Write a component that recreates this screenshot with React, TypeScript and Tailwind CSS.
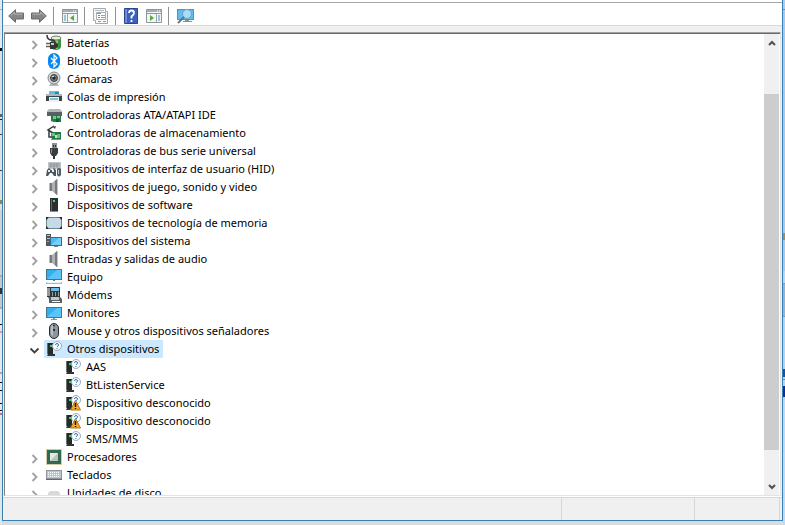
import type { ReactNode } from "react";
import clsx from "clsx";

type IconName =
  | "battery" | "bluetooth" | "camera" | "printer" | "ide" | "storage" | "usb" | "hid"
  | "speaker" | "software" | "memory" | "system" | "monitor" | "computer" | "modem"
  | "mouse" | "unknown" | "warning" | "cpu" | "keyboard" | "disk";

type Device = {
  label: string;
  icon: IconName;
  children?: Device[];
};

const devices: Device[] = [
  { label: "Baterías", icon: "battery" },
  { label: "Bluetooth", icon: "bluetooth" },
  { label: "Cámaras", icon: "camera" },
  { label: "Colas de impresión", icon: "printer" },
  { label: "Controladoras ATA/ATAPI IDE", icon: "ide" },
  { label: "Controladoras de almacenamiento", icon: "storage" },
  { label: "Controladoras de bus serie universal", icon: "usb" },
  { label: "Dispositivos de interfaz de usuario (HID)", icon: "hid" },
  { label: "Dispositivos de juego, sonido y video", icon: "speaker" },
  { label: "Dispositivos de software", icon: "software" },
  { label: "Dispositivos de tecnología de memoria", icon: "memory" },
  { label: "Dispositivos del sistema", icon: "system" },
  { label: "Entradas y salidas de audio", icon: "speaker" },
  { label: "Equipo", icon: "computer" },
  { label: "Módems", icon: "modem" },
  { label: "Monitores", icon: "monitor" },
  { label: "Mouse y otros dispositivos señaladores", icon: "mouse" },
  {
    label: "Otros dispositivos",
    icon: "unknown",
    children: [
      { label: "AAS", icon: "unknown" },
      { label: "BtListenService", icon: "unknown" },
      { label: "Dispositivo desconocido", icon: "warning" },
      { label: "Dispositivo desconocido", icon: "warning" },
      { label: "SMS/MMS", icon: "unknown" },
    ],
  },
  { label: "Procesadores", icon: "cpu" },
  { label: "Teclados", icon: "keyboard" },
  { label: "Unidades de disco", icon: "disk" },
];

// slivers of the page behind the window: [height share, colour]
const leftEdge: [number, string][] = [
  [9, "#e4e9ec"], [1, "#a9b4bc"], [37, "#e4e9ec"], [3, "#101010"], [61, "#d9dfe2"],
  [3, "#55666a"], [2, "#d9dfe2"], [1, "#202020"], [13, "#d9dfe2"], [1, "#444444"],
  [34, "#dde1e3"], [1, "#444444"], [29, "#dde1e3"], [4, "#8f8858"], [5, "#dde1e3"],
  [64, "#cfd3d6"], [2, "#a7adb1"], [10, "#c2c8cc"], [6, "#33342c"], [13, "#c2c8cc"],
  [2, "#a7adb1"], [14, "#e4e8ea"], [1, "#101010"], [6, "#e4e8ea"], [2, "#d89a9e"],
  [38, "#e4e8ea"], [2, "#d89a9e"], [8, "#e4e8ea"], [1, "#101010"], [6, "#e4e8ea"],
  [1, "#101010"], [12, "#e4e8ea"], [1, "#101010"], [6, "#e4e8ea"], [1, "#101010"],
  [2, "#e4e8ea"], [2, "#c0747c"], [107, "#dfe6ea"],
];

const rightEdge: [number, string][] = [
  [9, "#a9cdec"], [1, "#6d93b1"], [223, "#a4c9e9"], [7, "#a98a50"], [31, "#a4c9e9"],
  [12, "#b6d8f4"], [1, "#6f9dc4"], [32, "#8fb4d5"], [1, "#6f9dc4"], [52, "#b0d5f3"],
  [8, "#1453a4"], [2, "#b0d5f3"], [1, "#b07078"], [6, "#b0d5f3"], [11, "#0b2f94"],
  [3, "#b0d5f3"], [125, "#bcdcf5"],
];

const Edge = ({ parts }: { parts: [number, string][] }) => (
  <div className="flex w-[2px] shrink-0 flex-col" aria-hidden="true">
    {parts.map(([share, color], i) => (
      <span key={i} style={{ flexGrow: share, backgroundColor: color }} />
    ))}
  </div>
);

const Screen = () => (
  <>
    <path d="M0 2h16v11H0z" fill="#3f7797" />
    <path d="M1 3h14v9H1z" fill="#35aef0" />
    <path d="M1 12 11 3h4v9z" fill="#5cc4fa" />
  </>
);

const UnknownTower = () => (
  <>
    <path d="M1 2h6v11H1z" fill="#262a2a" />
    <path d="M1 2h1v11H1z" fill="#66706c" />
    <path d="M4 4h2v2H4z" fill="#36d860" />
    <path d="M2 13h7v2H1z" fill="#303636" />
    <circle cx="11" cy="5" r="4.5" fill="#f8fbfe" stroke="#9babb8" />
    <path d="M9.5 4q0-1.500 1.500-1.500T12.500 4q0 .8-1.500 1.800M11 7v1" fill="none" stroke="#3673b7" />
  </>
);

const icons: Record<IconName, ReactNode> = {
  battery: (
    <>
      <path d="M5 3q0-1.500 5-1.500T15 3v9q-1 3-5 3t-5-3z" fill="#3f8f3b" />
      <path d="M8 4h4v10H8z" fill="#7ccf6c" />
      <ellipse cx="10" cy="3" rx="5" ry="2" fill="#e3eee0" stroke="#6f7f6e" />
      <path d="M1 0q0 5 5 5 3 0 3 3" fill="none" stroke="#34393a" strokeWidth="1.500" />
      <path d="M4 7h5l3 2v3l-3 2H4z" fill="#34373a" />
      <path d="M0 8.500h4M0 11.500h4" stroke="#6d614f" strokeWidth="1.500" />
      <path d="M5 8h3v2H5z" fill="#e2c996" />
    </>
  ),
  bluetooth: (
    <>
      <rect x="2" width="12" height="16" rx="6" fill="#0788f2" />
      <path d="M5 5l6 6-3 3V2l3 3-6 6" fill="none" stroke="#fff" strokeWidth="1.200" />
    </>
  ),
  camera: (
    <>
      <path d="M5 12h6l2 3H3z" fill="#b4b7b9" />
      <circle cx="8" cy="7" r="6" fill="#d5d8d8" stroke="#85898b" />
      <circle cx="8" cy="7" r="3.500" fill="#73787b" stroke="#3e4346" />
      <circle cx="8" cy="7" r="1.500" fill="#202427" />
      <path d="M6 5h2v1H6z" fill="#dce3e7" />
    </>
  ),
  printer: (
    <>
      <path d="M3 2h10v4H3z" fill="#64bfe7" />
      <path d="M0 6h16v6H0z" fill="#3d4448" />
      <path d="M0 5h16v2H0z" fill="#aeb7bb" />
      <path d="M3 8h10v5H3z" fill="#eef2f3" />
      <path d="M4 9h8v2H4z" fill="#72c9df" />
      <path d="M9 3h4v2H9z" fill="#238bbb" />
    </>
  ),
  ide: (
    <>
      <path d="M1 4l2-2h11l2 2v4H1z" fill="#b4b7b8" />
      <path d="M1 5h15v4H1z" fill="#596062" />
      <path d="M5 8h10v7H5z" fill="#237b4a" />
      <path d="M7 9h3v3H7zM11 9h3v2h-3z" fill="#75c788" />
      <path d="M10 12h3v3h-3z" fill="#165939" />
      <path d="M5 14h2v1H5z" fill="#d3b66d" />
    </>
  ),
  storage: (
    <>
      <path d="M8 1 2 5l5 3M3 6v6h4" fill="none" stroke="#30383b" strokeWidth="1.500" />
      <path d="M7 2l3-1-1 3z" fill="#353d40" />
      <path d="M5 9l2-2h8v8H6z" fill="#207645" />
      <path d="M6 8h3v3H6zM11 9h3v4h-3z" fill="#6fbd81" />
      <path d="M9 10h2v3H9z" fill="#d1d7d2" />
      <path d="M5 14h10v1H5z" fill="#b48b47" />
    </>
  ),
  usb: (
    <>
      <path d="M6 0h5v6H6z" fill="#8b9093" />
      <path d="M7 2h1v2H7zM9 2h1v2H9z" fill="#303538" />
      <path d="M4 5h8v5l-2 3H6l-2-3z" fill="#383d40" />
      <path d="M5 6h1v4H5z" fill="#8b9093" />
      <path d="M7 13h2v3H7z" fill="#303538" />
    </>
  ),
  hid: (
    <>
      <path d="M2 1h13v7H2z" fill="#c1c5c8" />
      <path d="M3 3h11M3 5h11M5 2v5M8 2v5M11 2v5" stroke="#8f969a" />
      <path d="M0 15l1-6 2-2 2 2h2l2-2 1 3v5H8l-2-3H4l-2 3z" fill="#4c5559" />
      <path d="M2 9h2v2H2zM6 9h2v2H6z" fill="#e5eef3" />
      <path d="M11 8q2-2 4 0v6q-2 3-4 0z" fill="#52626c" />
      <path d="M12 9h1v4h-1z" fill="#b8cad5" />
      <path d="M7 7h1v1H7z" fill="#2f92ce" />
    </>
  ),
  speaker: (
    <>
      <path d="M3 4h3v8H3z" fill="#777b7e" />
      <path d="M3 4h1v8H3z" fill="#b6babd" />
      <path d="M6 4l5-4v16l-5-4z" fill="#aeb2b4" />
      <path d="M9 2l2-2v16l-2-2z" fill="#777b7e" />
      <path d="M11 0h1v16h-1z" fill="#c4c7c9" />
    </>
  ),
  software: (
    <>
      <path d="M4 1h8v14H4z" fill="#292f30" />
      <path d="M5 2h1v12H5z" fill="#5d6765" />
      <path d="M7 3h2v2H7z" fill="#47dd69" />
      <path d="M4 14h8v1H4z" fill="#81908b" />
    </>
  ),
  memory: (
    <>
      <path d="M0 2h16v12H0z" fill="#6f8795" />
      <path d="M2 3h12l1 2v6l-1 2H2l-1-2V5z" fill="#c5dae7" />
      <path d="M0 2h3L0 5zM13 2h3v3zM0 11l3 3H0zM16 11v3h-3z" fill="#1f2930" />
    </>
  ),
  system: (
    <>
      <path d="M0 1h5v12H0z" fill="#50565a" />
      <path d="M1 2h3v1H1zM1 5h3v1H1z" fill="#bac0c3" />
      <path d="M1 8h2v1H1z" fill="#69d270" />
      <path d="M4 4h12v9H4z" fill="#286f9c" />
      <path d="M5 5h10v7H5z" fill="#4dbbf3" />
      <path d="M5 12 13 5h2v7z" fill="#79cffa" />
      <path d="M8 13h4v1H8z" fill="#73838d" />
    </>
  ),
  computer: (
    <>
      <g transform="translate(0 -2)"><Screen /></g>
      <path d="M7 11h2v1H7z" fill="#637988" />
      <path d="M0 13h16v2H0z" fill="#a7b9c4" />
      <path d="M1 13h14v1H1z" fill="#edf3f7" />
    </>
  ),
  monitor: (
    <>
      <Screen />
      <path d="M7 13h2v1H7zM5 14h6v1H5z" fill="#8397a5" />
    </>
  ),
  modem: (
    <>
      <path d="M1 0h13v10H1z" fill="#30383d" />
      <path d="M1 1h3v8H1z" fill="#92999d" />
      <path d="M5 1h8v3H5z" fill="#66bee9" />
      <path d="M6 6h1M9 6h1M12 6h1M6 8h1M9 8h1M12 8h1" stroke="#fff" />
      <path d="M2 10h12l2 2v4H3v-4z" fill="#596165" />
      <path d="M5 10h8v3H5z" fill="#c6c9ca" />
      <path d="M6 14h8v1H6z" fill="#fff" />
    </>
  ),
  mouse: (
    <>
      <rect x="3.500" y=".5" width="9" height="15" rx="4.500" fill="#8b969f" stroke="#292e32" />
      <path d="M5 4q1-2 2-2v11q-2-1-2-3z" fill="#b5c0c9" />
      <path d="M7 2h2v6H7z" fill="#2a3035" />
      <path d="M8 3v3" stroke="#d4dee4" />
    </>
  ),
  unknown: <UnknownTower />,
  warning: (
    <>
      <UnknownTower />
      <path d="M10.500 5.500 15.500 15h-10z" fill="#f8ad22" stroke="#ad7415" />
      <path d="M10.500 8v4M10.500 13v1" stroke="#171717" strokeWidth="1.500" />
    </>
  ),
  cpu: (
    <>
      <path d="M.5 .5h15v15H.5z" fill="none" stroke="#a89a50" strokeDasharray="1 1" />
      <path d="M1 1h14v14H1z" fill="#316b4d" />
      <path d="M4 4h8v8H4z" fill="#bcc2be" />
      <path d="M4 12 12 4H4z" fill="#e4e7e4" />
    </>
  ),
  keyboard: (
    <>
      <path d="M0 3h16v10H0z" fill="#8e959d" />
      <path d="M1 4h14v7H1z" fill="#bdc4cb" />
      <path d="M2 5.500h12M2 7.500h12M2 9.500h12" stroke="#f7f9fa" strokeDasharray="1 1" />
      <path d="M0 12h16v1H0z" fill="#626970" />
    </>
  ),
  disk: <path d="M4 6h8l2 2v5H2V8z" fill="#d9dadb" />,
};

const DeviceIcon = ({ name }: { name: IconName }) => (
  <svg viewBox="0 0 16 16" className="size-4 shrink-0" aria-hidden="true">{icons[name]}</svg>
);

const DeviceRow = ({ device, child }: { device: Device; child?: boolean }) => {
  const open = !!device.children;
  return (
    <li>
      <div className={clsx("flex h-[18px] items-center", child ? "pl-[58px]" : "pl-6")}>
        {!child && (
          <button type="button" aria-label={device.label} aria-expanded={open} className="flex w-[15px] shrink-0 items-center pt-[3px]">
            <svg viewBox="0 0 11 10" className="h-[10px] w-[11px]" fill="none" strokeWidth="1.800" aria-hidden="true">
              {open ? <path d="M1.500 2.500l4 4 4-4" stroke="#404040" /> : <path d="M3.500 1l4 4-4 4" stroke="#a0a0a0" />}
            </svg>
          </button>
        )}
        <span className={clsx("flex h-[18px] items-center gap-[5px] pr-1 pl-[2px] whitespace-nowrap", open && "bg-[#cce8ff]")}>
          <DeviceIcon name={device.icon} />
          {device.label}
        </span>
      </div>
      {device.children && (
        <ul>
          {device.children.map((item, i) => (
            <DeviceRow key={i} device={item} child />
          ))}
        </ul>
      )}
    </li>
  );
};

const Arrow = ({ flip }: { flip?: boolean }) => (
  <svg viewBox="0 0 16 14" className={clsx("h-[14px] w-4", flip && "-scale-x-100")} aria-hidden="true">
    <path d="M.7 7 7.500 .7v3.300h8v6h-8v3.300z" fill="#868686" stroke="#6a6a6a" />
    <path d="M2.500 7 6.500 3.200v2h8" fill="none" stroke="#b4b4b4" />
  </svg>
);

const PanelIcon = ({ right }: { right?: boolean }) => (
  <svg viewBox="0 0 16 14" className="h-[14px] w-4" aria-hidden="true">
    <path d="M.5 .5h15v13H.5z" fill="#f4f5f6" stroke="#8d969d" />
    <path d="M1 1h14v2H1z" fill="#a4adb4" />
    <path d="M11 2h1M13 2h1" stroke="#fff" />
    <path d="M1 4.500h14" stroke="#8c959d" />
    {right ? (
      <>
        <path d="M10.500 5v8" stroke="#9aa4ab" />
        <path d="M12 7h2M12 9h2M12 11h2" stroke="#4c91c1" />
        <path d="M4 6v6l4-3z" fill="#55ad35" />
      </>
    ) : (
      <>
        <path d="M5.500 5v8" stroke="#9aa4ab" />
        <path d="M2 7h2M2 9h2M2 11h2" stroke="#4c91c1" />
        <path d="M12 6v6L8 9z" fill="#55ad35" />
      </>
    )}
  </svg>
);

const ToolButton = ({ label, children }: { label: string; children: ReactNode }) => (
  <button type="button" aria-label={label} className="flex h-5 items-center">{children}</button>
);

const Divider = () => <span className="mr-2 ml-[6px] h-[18px] w-px bg-[#909090]" />;

const Toolbar = () => (
  <div className="flex h-[23px] shrink-0 items-center border-b border-[#d8d8d8] bg-white pt-1 pl-[5px]">
    <div className="flex gap-[7px]">
      <ToolButton label="Atrás"><Arrow /></ToolButton>
      <ToolButton label="Adelante"><Arrow flip /></ToolButton>
    </div>
    <Divider />
    <ToolButton label="Mostrar árbol de consola"><PanelIcon /></ToolButton>
    <Divider />
    <ToolButton label="Propiedades">
      <svg viewBox="0 0 16 16" className="size-4" aria-hidden="true">
        <path d="M.5 .5h12v3h2v12h-12v-3h-2z" fill="#f8f8f8" stroke="#a2a8ad" />
        <path d="M2 2.500h9" stroke="#b3b9be" />
        <path d="M3.500 4.500h9v7h-9z" fill="#fff" stroke="#a9b0b4" />
        <path d="M4 5.500h4" stroke="#8b949a" />
        <path d="M5 7.500h2M5 9.500h2" stroke="#47a0c9" />
        <path d="M8 7.500h4M8 9.500h4" stroke="#9ba2a7" />
        <path d="M5 13.500h3M10 13.500h3" stroke="#5fa9d0" />
      </svg>
    </ToolButton>
    <Divider />
    <div className="flex gap-2">
      <ToolButton label="Ayuda">
        <svg viewBox="0 0 14 16" className="h-4 w-[14px]" aria-hidden="true">
          <path d="M.5 .5h13v15H.5z" fill="#3c62ba" stroke="#26468f" />
          <path d="M1 1h2v14H1z" fill="#6d8bd2" />
          <path d="M5 5q0-2.500 2.500-2.500T10 5q0 1.500-2.500 3.500v2M7.500 12v2" fill="none" stroke="#fff" strokeWidth="1.800" />
        </svg>
      </ToolButton>
      <ToolButton label="Mostrar panel de acciones"><PanelIcon right /></ToolButton>
    </div>
    <Divider />
    <ToolButton label="Buscar cambios de hardware">
      <svg viewBox="0 0 18 16" className="h-4 w-[18px]" aria-hidden="true">
        <path d="M0 1h17v11H0z" fill="#4299c8" />
        <path d="M1 2h15v9H1z" fill="#5ebcf0" />
        <path d="M8 12h4v1H8zM6 13h9v1H6z" fill="#83909a" />
        <circle cx="10" cy="6" r="4.500" fill="#a5dcf8" stroke="#6fa3c0" />
        <path d="M7 9 1 15" stroke="#64747f" strokeWidth="1.800" />
      </svg>
    </ToolButton>
  </div>
);

const ScrollBar = () => (
  <div className="mr-px flex w-[15px] shrink-0 flex-col bg-[#f0f0f0]">
    <button type="button" aria-label="Desplazar hacia arriba" className="flex h-[17px] shrink-0 items-center justify-center">
      <svg viewBox="0 0 8 8" className="size-2" fill="none" stroke="#505050" strokeWidth="2" aria-hidden="true"><path d="M1 6l3-3 3 3" /></svg>
    </button>
    <div className="flex min-h-0 grow flex-col">
      <div className="grow-[43]" />
      <div className="grow-[356] bg-[#cdcdcd]" />
      <div className="grow-[28]" />
    </div>
    <button type="button" aria-label="Desplazar hacia abajo" className="flex h-[17px] shrink-0 items-center justify-center">
      <svg viewBox="0 0 8 8" className="size-2" fill="none" stroke="#505050" strokeWidth="2" aria-hidden="true"><path d="M1 2l3 3 3-3" /></svg>
    </button>
  </div>
);

export default function App() {
  return (
    <div className="flex h-screen bg-[#d3dde4] font-['Noto_Sans','Open_Sans',sans-serif] text-[11px] text-black">
      <Edge parts={leftEdge} />
      <div className="mb-1 flex min-w-0 grow flex-col border-x border-b border-[#3c7fb1] bg-[#f0f0f0]">
        <div className="h-[3px] shrink-0 border-b border-[#a8a8a8] bg-white" />
        <Toolbar />
        <main className="mx-px mt-[6px] flex min-h-0 grow flex-col border border-t-[#a0a0a0] border-r-[#e3e3e3] border-b-[#e3e3e3] border-l-[#808080] bg-white">
          <div className="flex min-h-0 grow border-t border-[#696969]">
            <div className="min-w-0 grow overflow-hidden">
              <ul>
                {devices.map((device) => (
                  <DeviceRow key={device.label} device={device} />
                ))}
              </ul>
            </div>
            <ScrollBar />
          </div>
        </main>
        <footer className="h-6 shrink-0 border-t border-white">
          <div className="flex h-full border-t border-[#d7d7d7]">
            <div className="grow border-r border-[#d7d7d7]" />
            <div className="w-[133px] border-r border-[#d7d7d7]" />
            <div className="mr-[2px] w-[85px] border-r border-[#d7d7d7]" />
          </div>
        </footer>
      </div>
      <Edge parts={rightEdge} />
    </div>
  );
}
